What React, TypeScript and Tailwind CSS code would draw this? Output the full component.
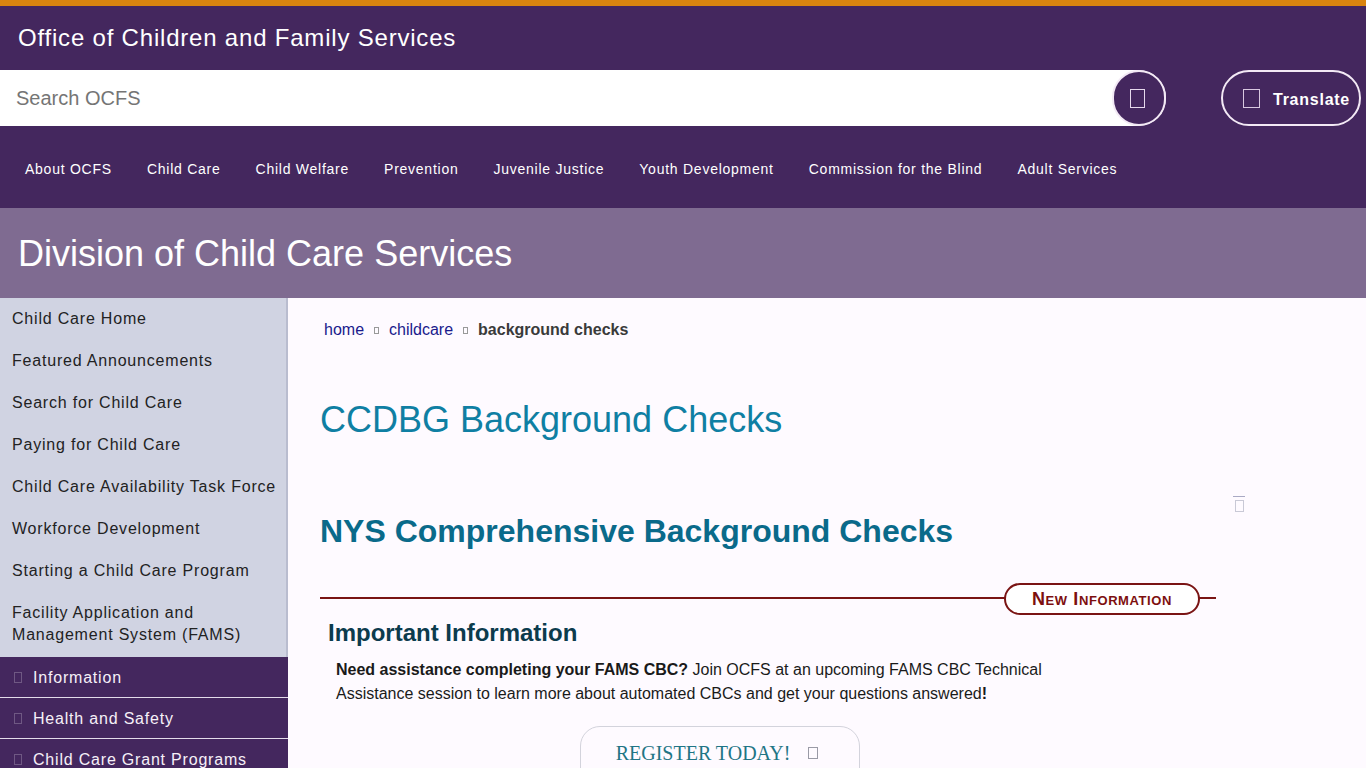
const NAV = ['About OCFS', 'Child Care', 'Child Welfare', 'Prevention', 'Juvenile Justice', 'Youth Development', 'Commission for the Blind', 'Adult Services'];
const SIDE = ['Child Care Home', 'Featured Announcements', 'Search for Child Care', 'Paying for Child Care', 'Child Care Availability Task Force', 'Workforce Development', 'Starting a Child Care Program'];
const SIDE_DARK = ['Information', 'Health and Safety', 'Child Care Grant Programs'];

// the icon font never loaded in the original, so its icons show as empty boxes
function Tofu({ className }: { className: string }) {
  return <span className={`block shrink-0 border ${className}`} />;
}

export default function App() {
  return (
    <div className="h-[768px] overflow-hidden bg-[#fefaff] font-['Liberation_Sans',Arial,sans-serif]">
      <div className="h-[6px] bg-[#d9840f]" />
      <div className="flex h-[64px] items-center bg-[#44275e] pl-[18px] text-[24px] tracking-[0.8px] text-white">Office of Children and Family Services</div>

      <div className="flex h-[56px] bg-[#44275e]">
        <div className="flex w-[1166px] items-center rounded-r-[28px] bg-white">
          <span className="flex-1 pl-[16px] text-[20px] text-[#757575]">Search OCFS</span>
          <div className="flex h-[56px] w-[54px] items-center justify-center rounded-full border-2 border-[#f3e9f5] bg-[#44275e] pr-[3px]">
            <Tofu className="h-[19px] w-[15px] border-[#e6d9ec]" />
          </div>
        </div>
        <div className="ml-[55px] flex h-[56px] w-[140px] items-center rounded-[28px] border-2 border-[#f3e9f5] pl-[20px]">
          <Tofu className="h-[19px] w-[17px] border-[#d8c8e0]" />
          <span className="ml-[13px] pt-[3px] text-[16px] font-bold tracking-[0.75px] text-white">Translate</span>
        </div>
      </div>

      <nav className="flex h-[82px] items-center gap-[35px] bg-[#44275e] pl-[25px] pt-[4px] text-[14px] tracking-[0.75px] text-white">
        {NAV.map(n => <span key={n}>{n}</span>)}
      </nav>

      <div className="flex h-[90px] items-center bg-[#7f6b91] pl-[18px] pt-[2px] text-[36px] text-white">Division of Child Care Services</div>

      <div className="flex">
        <aside className="w-[288px] shrink-0">
          <div className="border-r-2 border-[#b9bccf] bg-[#d0d3e2] pb-[11px] pl-[12px] text-[16px] leading-[22px] tracking-[0.8px] text-[#222]">
            <div className="flex flex-col gap-[20px] pt-[10px]">
              {SIDE.map(s => <div key={s}>{s}</div>)}
              <div>Facility Application and<br />Management System (FAMS)</div>
            </div>
          </div>
          {SIDE_DARK.map(s => (
            <div key={s} className="flex h-[41px] items-center border-b border-[#e4dcea] bg-[#44275e] pl-[14px] pt-[1px] text-[16px] tracking-[0.8px] text-[#f6f0f8]">
              <Tofu className="h-[11px] w-[8px] border-[#6f5883]" />
              <span className="ml-[11px] whitespace-nowrap">{s}</span>
            </div>
          ))}
        </aside>

        <main className="relative flex-1 pl-[32px]">
          <div className="mt-[21px] flex h-[22px] items-center pl-[4px] text-[16px]">
            <span className="text-[#1a1a8c]">home</span>
            <Tofu className="mx-[10px] h-[7px] w-[5px] border-[#999]" />
            <span className="text-[#1a1a8c]">childcare</span>
            <Tofu className="mx-[10px] h-[7px] w-[5px] border-[#999]" />
            <span className="font-bold text-[#3a3a3a]">background checks</span>
          </div>

          <h1 className="mt-[57px] text-[36px] leading-[44px] text-[#0f7fa3]">CCDBG Background Checks</h1>

          <h2 className="mt-[70px] text-[32px] font-bold leading-[38px] text-[#0a6a8a]">NYS Comprehensive Background Checks</h2>

          <div className="absolute right-[121px] top-[198px]">
            <div className="h-px w-[12px] bg-[#a9a9c4]" />
            <Tofu className="mx-auto mt-[3px] h-[12px] w-[9px] border-[#c9c9d6]" />
          </div>

          <div className="relative mt-[33px] h-[32px] w-[896px]">
            <div className="absolute left-0 right-0 top-[14px] h-[2px] bg-[#7a1414]" />
            <div className="absolute left-[684px] top-0 flex h-[32px] w-[196px] items-center justify-center rounded-[16px] border-2 border-[#7a1414] bg-white text-[18px] font-bold tracking-[0.6px] text-[#7d0f0f] [font-variant:small-caps]">New Information</div>
          </div>

          <h3 className="ml-[8px] mt-[3px] text-[24px] font-bold leading-[30px] text-[#0c3b4d]">Important Information</h3>

          <p className="ml-[16px] mt-[10px] w-[740px] text-[16px] leading-[24px] text-[#1a1a1a]">
            <b>Need assistance completing your FAMS CBC?</b> Join OCFS at an upcoming FAMS CBC Technical Assistance session to learn more about automated CBCs and get your questions answered<b>!</b>
          </p>

          <div className="ml-[260px] mt-[20px] flex h-[70px] w-[280px] items-start justify-center rounded-t-[20px] border border-[#d3d3dc] pr-[6px] pt-[13px] font-['Liberation_Serif',serif] text-[20px] leading-[26px] text-[#1f7585]">
            REGISTER TODAY!
            <Tofu className="ml-[18px] mt-[7px] h-[12px] w-[10px] border-[#9a9aa6]" />
          </div>
        </main>
      </div>
    </div>
  );
}
